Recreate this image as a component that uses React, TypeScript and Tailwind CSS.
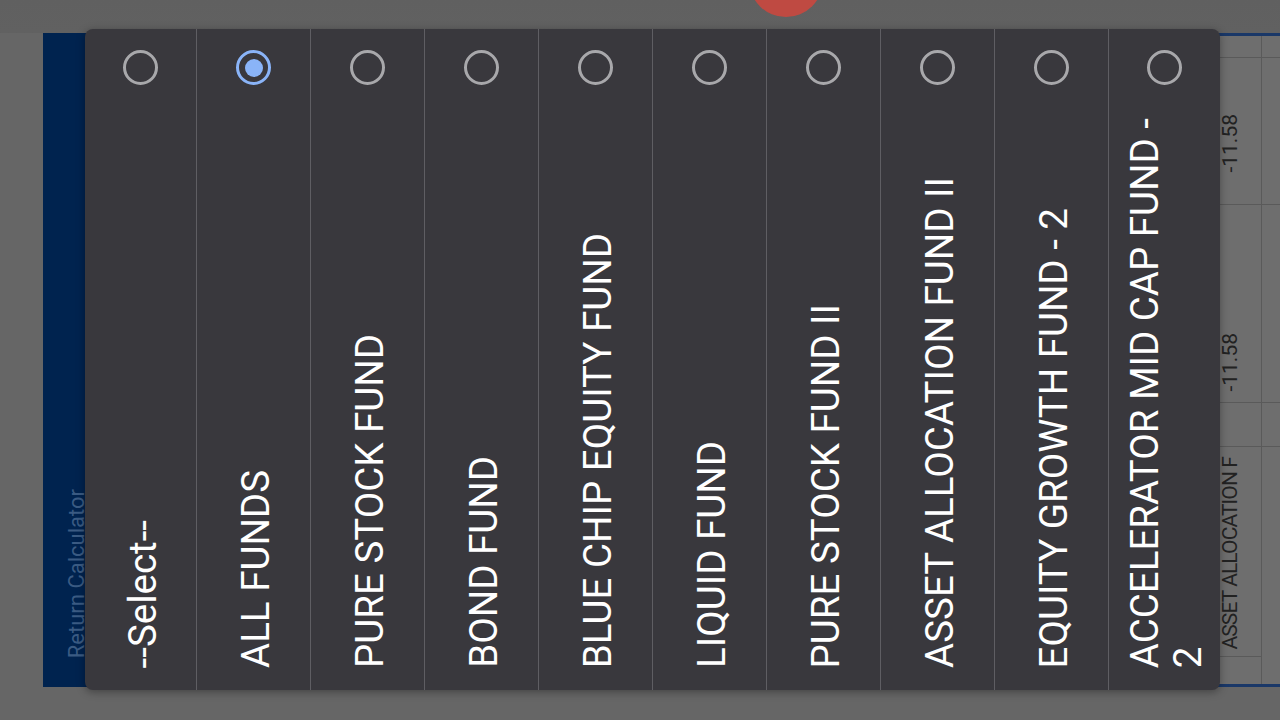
import React from "react";

const items: { label: React.ReactNode; w: string; selected?: boolean }[] = [
  { label: "--Select--", w: "w-[111px]" },
  { label: "ALL FUNDS", w: "w-[114px] border-l border-[#5f5e63]", selected: true },
  { label: "PURE STOCK FUND", w: "w-[114px] border-l border-[#5f5e63]" },
  { label: "BOND FUND", w: "w-[114px] border-l border-[#5f5e63]" },
  { label: "BLUE CHIP EQUITY FUND", w: "w-[114px] border-l border-[#5f5e63]" },
  { label: "LIQUID FUND", w: "w-[114px] border-l border-[#5f5e63]" },
  { label: "PURE STOCK FUND II", w: "w-[114px] border-l border-[#5f5e63]" },
  { label: "ASSET ALLOCATION FUND II", w: "w-[114px] border-l border-[#5f5e63]" },
  { label: "EQUITY GROWTH FUND - 2", w: "w-[114px] border-l border-[#5f5e63]" },
  {
    label: (
      <>
        ACCELERATOR MID CAP FUND -<br />2
      </>
    ),
    w: "w-[112px] border-l border-[#5f5e63]",
  },
];

function Radio({ selected }: { selected?: boolean }) {
  if (selected) {
    return (
      <div className="mt-[21px] flex h-[35px] w-[35px] shrink-0 items-center justify-center rounded-full border-[3px] border-[#8ab4f8]">
        <div className="h-[18px] w-[18px] rounded-full bg-[#8ab4f8]" />
      </div>
    );
  }
  return <div className="mt-[21px] h-[35px] w-[35px] shrink-0 rounded-full border-[3px] border-[#a8a8ab]" />;
}

export default function App() {
  return (
    <div className="relative h-[720px] w-[1280px] overflow-hidden bg-[#666666] font-['Roboto','Liberation_Sans',sans-serif]">
      {/* underlying page */}
      <div className="bg-gradient-to-b from-[#606060] to-[#616161] h-[33px] w-full" />
      <div className="flex h-[654px] w-[1279px] ml-[43px]">
        <div className="flex w-[70px] shrink-0 flex-col items-start justify-end bg-[#00234f] pb-[29px] pl-[21px]">
          <div className="rotate-180 whitespace-nowrap text-[22px] leading-[26px] text-[#3b5b83] [writing-mode:vertical-rl]">
            Return Calculator
          </div>
        </div>
        <div className="flex flex-1 justify-end border-y-[3px] border-[#1a3868] bg-[#6e6e6e]">
          <div className="flex w-[60px] flex-col border-r border-[#5a5a5a]">
            <div className="h-[22px] border-b border-[#5a5a5a]" />
            <div className="flex h-[147px] flex-col items-center justify-end border-b border-[#5a5a5a] pb-[31px] pr-[3px]">
              <span className="rotate-180 whitespace-nowrap text-[21px] leading-[22px] text-[#222222] [writing-mode:vertical-rl]">-11.58</span>
            </div>
            <div className="flex h-[198px] flex-col items-center justify-end border-b border-[#5a5a5a] pb-[10px] pr-[3px]">
              <span className="rotate-180 whitespace-nowrap text-[21px] leading-[22px] text-[#222222] [writing-mode:vertical-rl]">-11.58</span>
            </div>
            <div className="h-[44px] border-b border-[#5a5a5a]" />
            <div className="flex h-[210px] flex-col items-center justify-end overflow-hidden border-b border-[#5a5a5a] pb-[6px] pr-[3px]">
              <span className="rotate-180 whitespace-nowrap text-[21px] leading-[22px] tracking-[-0.9px] text-[#222222] [writing-mode:vertical-rl]">ASSET ALLOCATION F</span>
            </div>
            <div className="flex-1" />
          </div>
          <div className="flex w-[60px] flex-col">
            <div className="h-[22px] border-b border-[#5a5a5a]" />
            <div className="flex h-[147px] flex-col items-center justify-end border-b border-[#5a5a5a] pb-[31px]">
              <span className="rotate-180 whitespace-nowrap text-[21px] leading-[22px] text-[#222222] [writing-mode:vertical-rl]">33.33</span>
            </div>
            <div className="flex h-[198px] flex-col items-center justify-end border-b border-[#5a5a5a] pb-[16px]">
              <span className="rotate-180 whitespace-nowrap text-[21px] leading-[22px] text-[#222222] [writing-mode:vertical-rl]">33.33</span>
            </div>
            <div className="h-[44px] border-b border-[#5a5a5a]" />
            <div className="flex-1" />
          </div>
        </div>
      </div>

      {/* floating red button */}
      <div className="absolute left-[749px] top-[-57px] h-[74px] w-[74px] rounded-full bg-[#bf4a42]" />

      {/* dialog */}
      <div className="absolute left-[85px] top-[29px] flex h-[661px] w-[1135px] overflow-hidden rounded-[8px] bg-[#39383d] shadow-[0_2px_8px_rgba(0,0,0,0.35)]">
        {items.map((it, i) => (
          <div key={i} className={`flex h-full shrink-0 flex-col items-center ${it.w}`}>
            <Radio selected={it.selected} />
            <div className="mt-auto mb-[22px] ml-[3px] rotate-180 whitespace-nowrap text-[38.5px] leading-[43px] text-white [writing-mode:vertical-rl]">
              {it.label}
            </div>
          </div>
        ))}
      </div>
    </div>
  );
}
